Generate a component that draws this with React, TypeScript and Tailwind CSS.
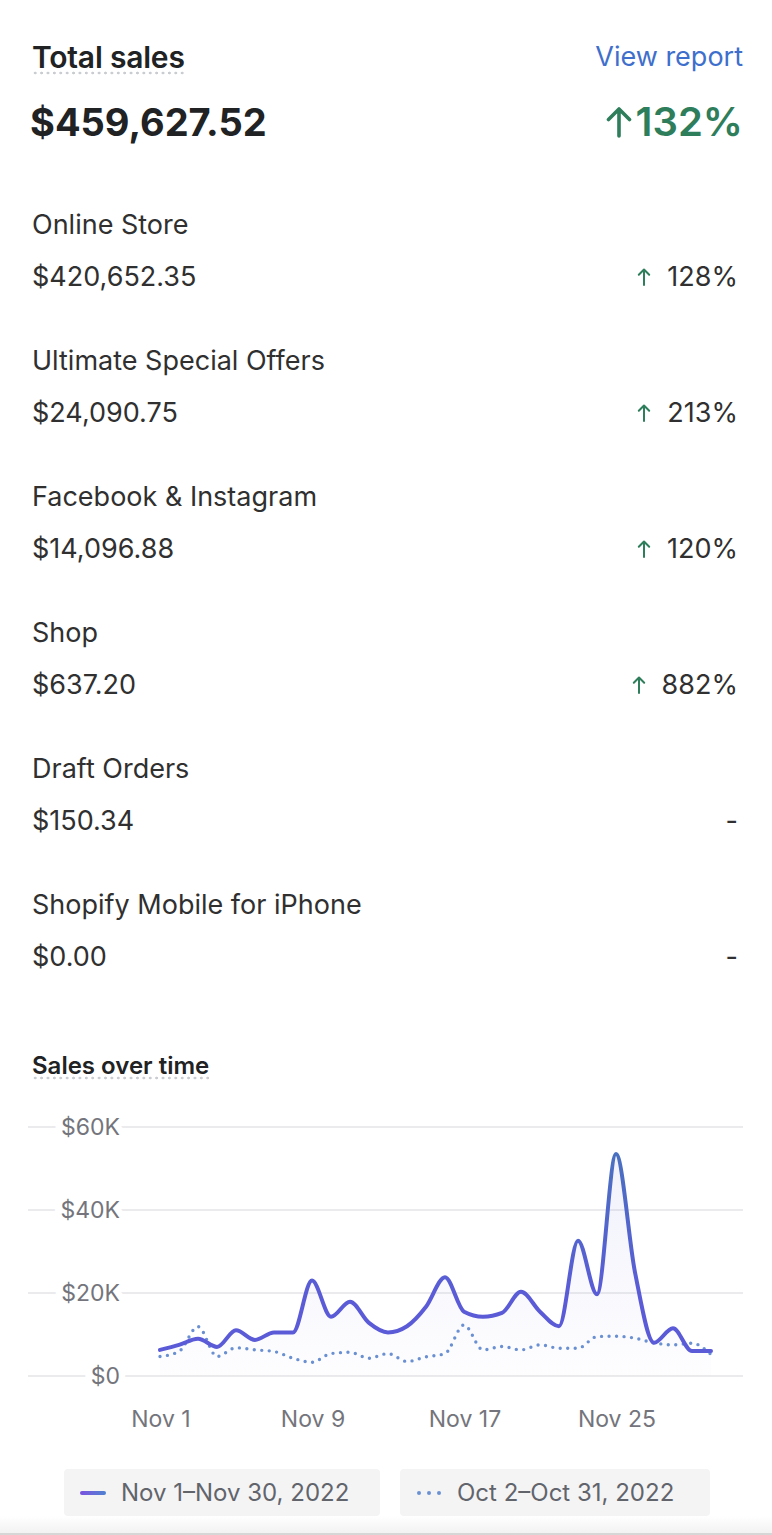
import React from "react";

const channels = [
  { name: "Online Store", amount: "$420,652.35", change: "128%" },
  { name: "Ultimate Special Offers", amount: "$24,090.75", change: "213%" },
  { name: "Facebook & Instagram", amount: "$14,096.88", change: "120%" },
  { name: "Shop", amount: "$637.20", change: "882%" },
  { name: "Draft Orders", amount: "$150.34", change: null },
  { name: "Shopify Mobile for iPhone", amount: "$0.00", change: null },
];

const current = [
  6.3, 7.5, 9, 7, 11, 8.7, 10.5, 10.5, 23, 14.3, 17.9, 12.8, 10.5, 12, 16.7,
  23.8, 15.5, 14.3, 15.2, 20.3, 15.5, 12, 32.6, 19.7, 53.5, 25, 8, 11.5, 6, 6,
];

const previous = [
  4.7, 5.9, 11.9, 4.7, 6.8, 6.3, 5.9, 4.3, 3.3, 5.4, 5.7, 4.3, 5.4, 3.5, 4.6,
  5.4, 12.3, 6.3, 7.1, 6.3, 7.5, 6.7, 6.7, 9.5, 9.6, 9.1, 8.0, 7.5, 7.9, 5.2,
];

const X0 = 160;
const DX = 19;
const BASE = 276;
const PER_K = 4.15;

// monotone-x curve, same idea as d3.curveMonotoneX
function monotonePath(values: number[]) {
  const pts = values.map((v, i) => [X0 + DX * i, BASE - v * PER_K]);
  const n = pts.length;
  const s: number[] = [];
  for (let i = 0; i < n - 1; i++) s.push((pts[i + 1][1] - pts[i][1]) / DX);
  const m: number[] = new Array(n).fill(0);
  for (let i = 1; i < n - 1; i++) {
    const a = s[i - 1];
    const b = s[i];
    if (a * b <= 0) m[i] = 0;
    else {
      const sign = a < 0 ? -1 : 1;
      m[i] = 2 * sign * Math.min(Math.abs(a), Math.abs(b), 0.25 * Math.abs(a + b));
    }
  }
  m[0] = (3 * s[0] - m[1]) / 2;
  m[n - 1] = (3 * s[n - 2] - m[n - 2]) / 2;
  let d = `M${pts[0][0]},${pts[0][1].toFixed(1)}`;
  const h = DX / 3;
  for (let i = 0; i < n - 1; i++) {
    const [x0, y0] = pts[i];
    const [x1, y1] = pts[i + 1];
    d += ` C${x0 + h},${(y0 + h * m[i]).toFixed(1)} ${x1 - h},${(y1 - h * m[i + 1]).toFixed(1)} ${x1},${y1.toFixed(1)}`;
  }
  return d;
}

function UpArrow({ big }: { big?: boolean }) {
  if (big) {
    return (
      <svg width="26" height="32" viewBox="0 0 26 32" className="mr-[4px]">
        <path
          d="M13 30V3M2.5 13.5L13 3l10.5 10.5"
          fill="none"
          stroke="#2e7d5b"
          strokeWidth="3.6"
          strokeLinecap="round"
          strokeLinejoin="round"
        />
      </svg>
    );
  }
  return (
    <svg width="14" height="20" viewBox="0 0 14 20">
      <path
        d="M7 18V2.5M1.8 7.7L7 2.5l5.2 5.2"
        fill="none"
        stroke="#2e7d5b"
        strokeWidth="2"
        strokeLinecap="round"
        strokeLinejoin="round"
      />
    </svg>
  );
}

const dotted =
  "bg-[radial-gradient(circle,#c9ccd0_1.3px,transparent_1.6px)] bg-[length:6.4px_4px] bg-repeat-x bg-[position:0_100%]";

function SalesChart() {
  const line = monotonePath(current);
  const area = `${line} L${X0 + DX * 29},${BASE} L${X0},${BASE} Z`;
  const prevLine = monotonePath(previous);
  const grid = [
    { y: 27, label: "$60K" },
    { y: 110, label: "$40K" },
    { y: 193, label: "$20K" },
    { y: 276, label: "$0" },
  ];
  const ticks = [
    { x: 161, label: "Nov 1" },
    { x: 313, label: "Nov 9" },
    { x: 465, label: "Nov 17" },
    { x: 617, label: "Nov 25" },
  ];
  return (
    <svg width="772" height="340" viewBox="0 0 772 340" className="block">
      <defs>
        <linearGradient id="lineGrad" x1="0" y1="54" x2="0" y2="200" gradientUnits="userSpaceOnUse">
          <stop offset="0" stopColor="#4a70c0" />
          <stop offset="1" stopColor="#5b5bd7" />
        </linearGradient>
        <linearGradient id="areaGrad" x1="0" y1="54" x2="0" y2="276" gradientUnits="userSpaceOnUse">
          <stop offset="0" stopColor="#6366d9" stopOpacity="0.09" />
          <stop offset="1" stopColor="#6366d9" stopOpacity="0.01" />
        </linearGradient>
      </defs>
      {grid.map((g) => (
        <line key={g.label} x1="28" x2="743" y1={g.y} y2={g.y} stroke="#ebebed" strokeWidth="2" />
      ))}
      {grid.map((g) => (
        <text
          key={g.label}
          x="120"
          y={g.y + 8}
          textAnchor="end"
          fontFamily="Inter, sans-serif"
          fontSize="23"
          fill="#74757c"
          stroke="#ffffff"
          strokeWidth="13"
          paintOrder="stroke"
        >
          {g.label}
        </text>
      ))}
      <path d={area} fill="url(#areaGrad)" />
      <path
        d={prevLine}
        fill="none"
        stroke="#6a90d2"
        strokeWidth="3.4"
        strokeLinecap="round"
        strokeDasharray="0 7.5"
      />
      <path
        d={line}
        fill="none"
        stroke="url(#lineGrad)"
        strokeWidth="4"
        strokeLinecap="round"
        strokeLinejoin="round"
      />
      {ticks.map((t) => (
        <text
          key={t.label}
          x={t.x}
          y="327"
          textAnchor="middle"
          fontFamily="Inter, sans-serif"
          fontSize="23"
          fill="#74757c"
        >
          {t.label}
        </text>
      ))}
    </svg>
  );
}

export default function App() {
  return (
    <div className="flex h-[1535px] w-[772px] flex-col bg-white font-['Inter',sans-serif] text-[#202223]">
      <div className="pl-8 pr-[29px] pt-[39px]">
        <div className="flex items-center justify-between">
          <span className={`text-[30px] font-semibold leading-[36px] tracking-[-0.2px] ${dotted}`}>Total sales</span>
          <span className="text-[27px] leading-[36px] text-[#3f6fcc]">View report</span>
        </div>
        <div className="mt-6 flex items-center justify-between">
          <span className="-ml-[2px] text-[38px] font-bold leading-[46px]">$459,627.52</span>
          <span className="flex items-center text-[40px] font-semibold leading-[46px] text-[#2e7d5b]">
            <UpArrow big />
            132%
          </span>
        </div>

        <div className="mt-[62px] flex flex-col gap-12">
          {channels.map((c) => (
            <div key={c.name} className="flex flex-col gap-4 pr-[5px] text-[27px] leading-[36px] text-[#303030]">
              <span>{c.name}</span>
              <div className="flex items-center justify-between">
                <span>{c.amount}</span>
                {c.change ? (
                  <span className="flex items-center gap-[16px]">
                    <UpArrow />
                    {c.change}
                  </span>
                ) : (
                  <span>-</span>
                )}
              </div>
            </div>
          ))}
        </div>

        <div className="mt-[75px]">
          <span className={`text-[24px] font-semibold leading-[32px] ${dotted}`}>Sales over time</span>
        </div>
      </div>

      <div className="mt-[18px]">
        <SalesChart />
      </div>

      <div className="mt-[29px] flex justify-center gap-5 pl-[2px]">
        <div className="flex h-[47px] w-[316px] items-center gap-[15px] rounded-[4px] bg-[#f4f4f5] px-4 text-[24px] text-[#62646c]">
          <span className="h-[4px] w-[26px] rounded-full bg-gradient-to-r from-[#7a4fe0] to-[#4a82d0]" />
          <span>Nov 1–Nov 30, 2022</span>
        </div>
        <div className="flex h-[47px] w-[310px] items-center gap-[15px] rounded-[4px] bg-[#f4f4f5] px-4 text-[24px] text-[#62646c]">
          <span className="flex w-[26px] justify-between px-[1px]">
            <span className="h-[4px] w-[4px] rounded-full bg-[#6a90d2]" />
            <span className="h-[4px] w-[4px] rounded-full bg-[#6a90d2]" />
            <span className="h-[4px] w-[4px] rounded-full bg-[#6a90d2]" />
          </span>
          <span>Oct 2–Oct 31, 2022</span>
        </div>
      </div>

      <div className="mt-auto h-[20px] border-b-2 border-[#d6d6d6] bg-gradient-to-b from-white to-[#f2f2f2]" />
    </div>
  );
}
